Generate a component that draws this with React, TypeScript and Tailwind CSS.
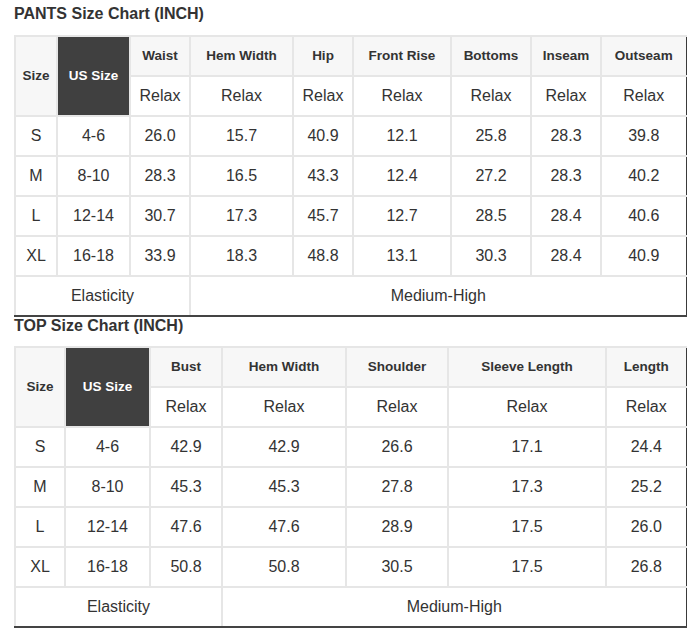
import React from "react";

type ChartProps = {
  title: string;
  widths: number[];
  headers: string[];
  rows: string[][];
  elasticSpan: number;
  titleClass: string;
};

function Chart({ title, widths, headers, rows, elasticSpan, titleClass }: ChartProps) {
  const n = widths.length;
  const base = "border-2 border-[#e6e6e6] text-center p-0";
  const lastCol = "border-r-[1px] border-r-[#3a3a3a]";
  const lastRow = "border-b-[2px] border-b-[#444]";
  return (
    <div>
      <div className={"h-[18px] leading-[18px] text-[16px] font-bold text-[#333] " + titleClass}>{title}</div>
      <table className="table-fixed border-collapse w-[671px] text-[#333]">
        <colgroup>
          {widths.map((w, i) => (
            <col key={i} style={{ width: w }} />
          ))}
        </colgroup>
        <tbody>
          <tr className="h-[40px]">
            <td rowSpan={2} className={base + " bg-[#f7f7f7] text-[13.5px] font-bold"}>Size</td>
            <td rowSpan={2} className={base + " bg-[#404040] text-white text-[13.5px] font-bold"}>US Size</td>
            {headers.map((h, i) => (
              <td key={i} className={base + " bg-[#f7f7f7] text-[13.5px] font-bold " + (i === headers.length - 1 ? lastCol : "")}>{h}</td>
            ))}
          </tr>
          <tr className="h-[40px]">
            {headers.map((_, i) => (
              <td key={i} className={base + " text-[16px] " + (i === headers.length - 1 ? lastCol : "")}>Relax</td>
            ))}
          </tr>
          {rows.map((r, ri) => (
            <tr key={ri} className="h-[40px]">
              {r.map((c, ci) => (
                <td key={ci} className={base + " text-[16px] " + (ci === n - 1 ? lastCol : "")}>{c}</td>
              ))}
            </tr>
          ))}
          <tr className="h-[40px]">
            <td colSpan={elasticSpan} className={base + " text-[16px] " + lastRow}>Elasticity</td>
            <td colSpan={n - elasticSpan} className={base + " text-[16px] " + lastRow + " " + lastCol}>Medium-High</td>
          </tr>
        </tbody>
      </table>
    </div>
  );
}

export default function App() {
  const pantsRows = [
    ["S", "4-6", "26.0", "15.7", "40.9", "12.1", "25.8", "28.3", "39.8"],
    ["M", "8-10", "28.3", "16.5", "43.3", "12.4", "27.2", "28.3", "40.2"],
    ["L", "12-14", "30.7", "17.3", "45.7", "12.7", "28.5", "28.4", "40.6"],
    ["XL", "16-18", "33.9", "18.3", "48.8", "13.1", "30.3", "28.4", "40.9"],
  ];
  const topRows = [
    ["S", "4-6", "42.9", "42.9", "26.6", "17.1", "24.4"],
    ["M", "8-10", "45.3", "45.3", "27.8", "17.3", "25.2"],
    ["L", "12-14", "47.6", "47.6", "28.9", "17.5", "26.0"],
    ["XL", "16-18", "50.8", "50.8", "30.5", "17.5", "26.8"],
  ];
  return (
    <div
      className="w-[700px] h-[640px] bg-white pl-[14px] pt-[5px] overflow-hidden"
      style={{ fontFamily: '"Liberation Sans", Arial, sans-serif' }}
    >
      <Chart
        title="PANTS Size Chart (INCH)"
        titleClass="mb-[12px]"
        widths={[42, 73, 60, 103, 60, 98, 80, 70, 85]}
        headers={["Waist", "Hem Width", "Hip", "Front Rise", "Bottoms", "Inseam", "Outseam"]}
        rows={pantsRows}
        elasticSpan={3}
      />
      <Chart
        title="TOP Size Chart (INCH)"
        titleClass="mb-[11px]"
        widths={[50, 85, 72, 124, 102, 158, 80]}
        headers={["Bust", "Hem Width", "Shoulder", "Sleeve Length", "Length"]}
        rows={topRows}
        elasticSpan={3}
      />
    </div>
  );
}
